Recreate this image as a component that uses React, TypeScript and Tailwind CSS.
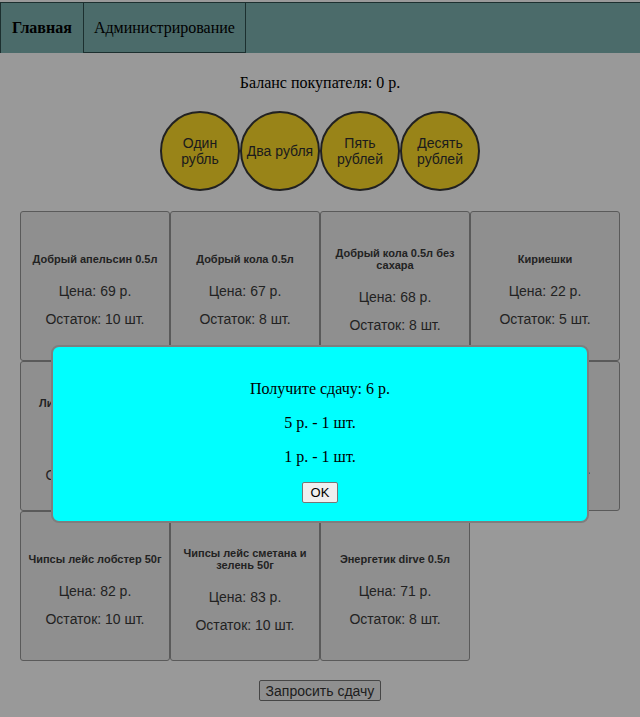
import React from 'react';

type Product = { name: string; price: number; stock: number };

const products: Product[] = [
  { name: 'Добрый апельсин 0.5л', price: 69, stock: 10 },
  { name: 'Добрый кола 0.5л', price: 67, stock: 8 },
  { name: 'Добрый кола 0.5л без сахара', price: 68, stock: 8 },
  { name: 'Кириешки', price: 22, stock: 5 },
  { name: 'Лимонад Дюшес без сахара 0.5л', price: 59, stock: 10 },
  { name: 'Сок Rich яблоко 1л', price: 115, stock: 6 },
  { name: 'Шоколад Alpen Gold', price: 89, stock: 7 },
  { name: 'Сникерс', price: 65, stock: 5 },
  { name: 'Чипсы лейс лобстер 50г', price: 82, stock: 10 },
  { name: 'Чипсы лейс сметана и зелень 50г', price: 83, stock: 10 },
  { name: 'Энергетик dirve 0.5л', price: 71, stock: 8 },
];

const coins = ['Один рубль', 'Два рубля', 'Пять рублей', 'Десять рублей'];

const serif = { fontFamily: '"Liberation Serif", "Times New Roman", serif' };
const sans = { fontFamily: '"Liberation Sans", Arial, sans-serif' };

const App: React.FC = () => {
  return (
    <div className="relative min-h-[717px] bg-white text-black" style={serif}>
      <nav className="mt-[2px] flex h-[51px] border-t border-[#2f4f4f] bg-[#7db2b1] text-[16px]">
        <div className="flex items-center border-x border-[#2f4f4f] px-[11px] font-bold">Главная</div>
        <div className="flex items-center border-r border-b border-[#2f4f4f] px-[10px]">Администрирование</div>
      </nav>

      <p className="mt-[21px] text-center text-[16px] leading-[18px]">Баланс покупателя: 0 р.</p>

      <div className="mt-[19px] flex justify-center" style={sans}>
        {coins.map((c) => (
          <button
            key={c}
            className="flex h-[80px] w-[80px] items-center justify-center rounded-full border-2 border-[#383838] bg-[#ffdc28] px-[1px] text-center text-[14px] leading-[16px] text-[#303030]"
          >
            {c}
          </button>
        ))}
      </div>

      <div className="mx-[20px] mt-[20px] flex flex-wrap" style={sans}>
        {products.map((p, i) => (
          <div
            key={i}
            className="flex h-[150px] w-[150px] flex-col items-center justify-center rounded-[3px] border border-[#969696] bg-[#eeeeee] px-[3px] pt-[8px] text-center text-[#3a3a3a]"
          >
            <h4 className="text-[11px] leading-[12px] font-bold">{p.name}</h4>
            <p className="mt-[18px] text-[14px] leading-[16px]">Цена: {p.price} р.</p>
            <p className="mt-[12px] text-[14px] leading-[16px]">Остаток: {p.stock} шт.</p>
          </div>
        ))}
      </div>

      <div className="mt-[19px] flex justify-center" style={sans}>
        <button className="h-[21px] rounded-[2px] border border-[#767676] bg-[#efefef] px-[6px] text-[14px] leading-[16px] text-[#333]">
          Запросить сдачу
        </button>
      </div>

      {/* modal overlay */}
      <div className="fixed inset-0 bg-black/40" />
      <div className="absolute top-[343px] left-[51px] w-[538px] rounded-lg border-2 border-[#7e7e7e] bg-[#00ffff] px-4 pt-[17px] pb-[18px] text-center text-[16px] leading-[18px]">
        <p className="mt-[16px]">Получите сдачу: 6 р.</p>
        <p className="mt-[16px]">5 р. - 1 шт.</p>
        <p className="mt-[16px]">1 р. - 1 шт.</p>
        <button
          className="mt-[16px] h-[21px] rounded-[2px] border border-[#767676] bg-[#efefef] px-[8px] text-[13px] leading-[15px]"
          style={sans}
        >
          OK
        </button>
      </div>
    </div>
  );
};

export default App;
